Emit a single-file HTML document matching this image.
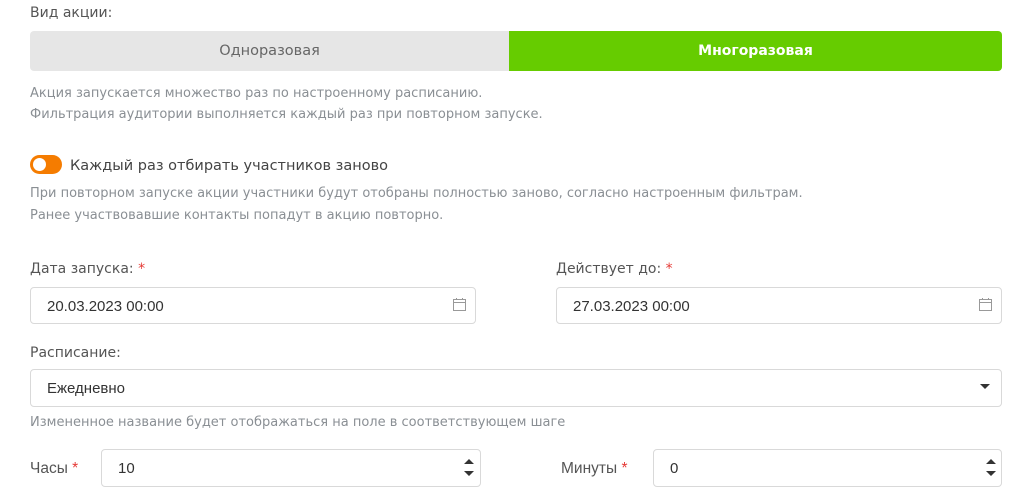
<!DOCTYPE html><html><head><meta charset="utf-8"><style>
body{margin:0;width:1027px;height:504px;background:#fff;font-family:"DejaVu Sans",sans-serif;position:relative;overflow:hidden;color:#555}
.a{position:absolute;white-space:nowrap}
.lbl{font-size:14px;color:#555}
.hint{font-size:13px;color:#8a8f94}
.box{position:absolute;border:1px solid #d9d9d9;border-radius:4px;box-sizing:border-box;background:#fff;font-size:15px;color:#333;font-family:"Liberation Sans",sans-serif}
.lib{font-family:"Liberation Sans",sans-serif;font-size:15.5px}
.star{color:#e53935}
</style></head><body>
<div class="a lbl" style="left:30px;top:5px">Вид акции:</div>
<div class="a" style="left:30px;top:31px;width:479px;height:40px;background:#e6e6e6;border-radius:4px 0 0 4px;text-align:center;line-height:41px;font-size:14.5px;color:#666">Одноразовая</div>
<div class="a" style="left:509px;top:31px;width:493px;height:40px;background:#66cc00;border-radius:0 4px 4px 0;text-align:center;line-height:41px;font-size:14px;color:#fff;font-weight:bold">Многоразовая</div>
<div class="a hint" style="left:30px;top:86px">Акция запускается множество раз по настроенному расписанию.</div>
<div class="a hint" style="left:30px;top:107px">Фильтрация аудитории выполняется каждый раз при повторном запуске.</div>
<div class="a" style="left:30px;top:155px;width:32px;height:19px;border-radius:10px;background:#f57c00"></div>
<div class="a" style="left:33px;top:158px;width:13px;height:13px;border-radius:50%;background:#fff"></div>
<div class="a" style="left:70px;top:158px;font-size:14.5px;color:#444">Каждый раз отбирать участников заново</div>
<div class="a hint" style="left:30px;top:186px">При повторном запуске акции участники будут отобраны полностью заново, согласно настроенным фильтрам.</div>
<div class="a hint" style="left:30px;top:208px">Ранее участвовавшие контакты попадут в акцию повторно.</div>
<div class="a lbl" style="left:30px;top:261px">Дата запуска: <span class="star">*</span></div>
<div class="a lbl" style="left:556px;top:261px">Действует до: <span class="star">*</span></div>
<div class="box" style="left:30px;top:287px;width:446px;height:37px;padding:10px 16px">20.03.2023 00:00</div>
<div class="box" style="left:556px;top:287px;width:446px;height:37px;padding:10px 16px">27.03.2023 00:00</div>
<svg class="a" style="left:452px;top:297px" width="16" height="16"><rect x="1.5" y="2.5" width="12" height="11" fill="none" stroke="#999"/><line x1="1.5" y1="5.5" x2="13.5" y2="5.5" stroke="#999"/><line x1="4.5" y1="1" x2="4.5" y2="3" stroke="#999"/><line x1="10.5" y1="1" x2="10.5" y2="3" stroke="#999"/></svg>
<svg class="a" style="left:978px;top:297px" width="16" height="16"><rect x="1.5" y="2.5" width="12" height="11" fill="none" stroke="#999"/><line x1="1.5" y1="5.5" x2="13.5" y2="5.5" stroke="#999"/><line x1="4.5" y1="1" x2="4.5" y2="3" stroke="#999"/><line x1="10.5" y1="1" x2="10.5" y2="3" stroke="#999"/></svg>
<div class="a lbl" style="left:30px;top:345px">Расписание:</div>
<div class="box" style="left:30px;top:369px;width:972px;height:38px;padding:10px 16px">Ежедневно</div>
<svg class="a" style="left:979px;top:383px" width="12" height="8"><path d="M1 1H11L6 6Z" fill="#333"/></svg>
<div class="a hint" style="left:30px;top:415px">Измененное название будет отображаться на поле в соответствующем шаге</div>
<div class="a lbl lib" style="left:30px;top:460px">Часы <span class="star">*</span></div>
<div class="box" style="left:101px;top:449px;width:380px;height:38px;padding:10px 16px">10</div>
<svg class="a" style="left:463px;top:458px" width="12" height="20"><path d="M1 6H11L6 1Z M1 13H11L6 18Z" fill="#333"/></svg>
<div class="a lbl lib" style="left:561px;top:460px">Минуты <span class="star">*</span></div>
<div class="box" style="left:653px;top:449px;width:349px;height:38px;padding:10px 16px">0</div>
<svg class="a" style="left:985px;top:458px" width="12" height="20"><path d="M1 6H11L6 1Z M1 13H11L6 18Z" fill="#333"/></svg>
</body></html>
